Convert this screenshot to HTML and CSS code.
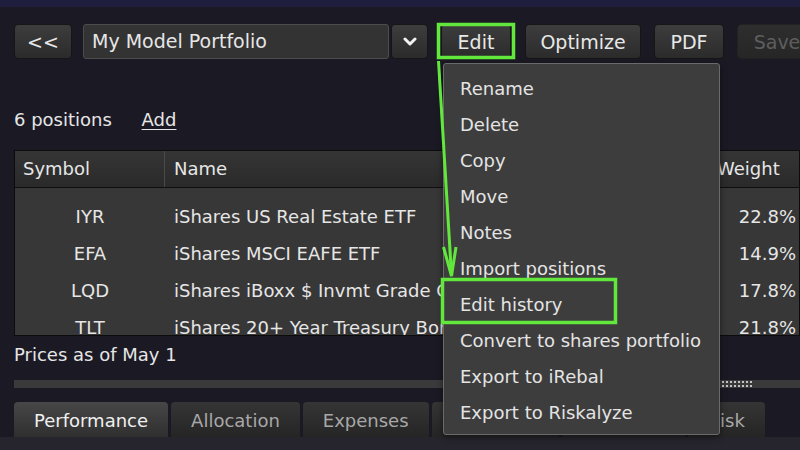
FILE: index.html
```html
<!DOCTYPE html>
<html lang="en">
<head>
    <meta charset="UTF-8">
    <meta name="viewport" content="width=device-width, initial-scale=1.0">
    <title>My Model Portfolio</title>
    <link rel="stylesheet" href="styles.css">
</head>
<body>

    <div class="topbar"></div>

    <div class="page">
        <!-- Toolbar -->
        <div class="toolbar">
            <button class="btn back-btn">&lt;&lt;</button>
            <div class="picker">My Model Portfolio</div>
            <button class="btn arrow-btn">
                <svg width="14" height="10" viewBox="0 0 14 10"><path d="M2 2 L7 7 L12 2" fill="none" stroke="#f2f2f2" stroke-width="3" stroke-linecap="round" stroke-linejoin="round"/></svg>
            </button>
            <button class="btn edit-btn">Edit</button>
            <button class="btn optimize-btn">Optimize</button>
            <button class="btn pdf-btn">PDF</button>
            <button class="btn save-btn" disabled>Save</button>
        </div>

        <div class="summary">
            <span>6 positions</span>
            <a class="add-link">Add</a>
        </div>

        <!-- Positions grid -->
        <div class="grid">
            <div class="grid-head">
                <div class="col-symbol">Symbol</div>
                <div class="col-name">Name</div>
                <div class="col-weight">Weight</div>
            </div>
            <div class="grid-body">
                <div class="grid-row"><div class="col-symbol">IYR</div><div class="col-name">iShares US Real Estate ETF</div><div class="col-weight">22.8%</div></div>
                <div class="grid-row"><div class="col-symbol">EFA</div><div class="col-name">iShares MSCI EAFE ETF</div><div class="col-weight">14.9%</div></div>
                <div class="grid-row"><div class="col-symbol">LQD</div><div class="col-name">iShares iBoxx $ Invmt Grade Corp Bd ETF</div><div class="col-weight">17.8%</div></div>
                <div class="grid-row"><div class="col-symbol">TLT</div><div class="col-name">iShares 20+ Year Treasury Bond ETF</div><div class="col-weight">21.8%</div></div>
            </div>
        </div>

        <div class="prices">Prices as of May 1</div>

        <div class="splitter"><span class="grip"></span></div>

        <div class="tabs">
            <div class="tab active">Performance</div>
            <div class="tab">Allocation</div>
            <div class="tab">Expenses</div>
            <div class="tab tab-stats">Statistics</div>
            <div class="tab tab-returns">Returns</div>
            <div class="tab">Risk</div>
        </div>
    </div>

    <div class="panel"></div>

    <!-- Edit menu -->
    <div class="edit-menu">
        <div class="menu-item">Rename</div>
        <div class="menu-item">Delete</div>
        <div class="menu-item">Copy</div>
        <div class="menu-item">Move</div>
        <div class="menu-item">Notes</div>
        <div class="menu-item">Import positions</div>
        <div class="menu-item">Edit history</div>
        <div class="menu-item">Convert to shares portfolio</div>
        <div class="menu-item">Export to iRebal</div>
        <div class="menu-item">Export to Riskalyze</div>
    </div>

    <!-- Green annotation -->
    <svg class="annotation" width="800" height="450" viewBox="0 0 800 450">
        <rect x="438.5" y="24.5" width="75" height="33" fill="none" stroke="#62e83c" stroke-width="3.5"/>
        <rect x="442.5" y="279.5" width="173" height="43" fill="none" stroke="#62e83c" stroke-width="3.5"/>
        <path d="M438.5 61 L451.5 275" fill="none" stroke="#62e83c" stroke-width="3"/>
        <path d="M443.5 247 L451.5 276 L456 247" fill="none" stroke="#62e83c" stroke-width="3" stroke-linejoin="miter"/>
    </svg>

</body>
</html>
```

FILE: styles.css
```css
body {
    font-family: "DejaVu Sans", Verdana, sans-serif;
    background-color: #1b1a24;
    color: #e6e6e6;
    margin: 0;
    width: 800px;
    height: 450px;
    overflow: hidden;
    position: relative;
}

.topbar {
    height: 7px;
    background-color: #1f1e3e;
}

.page {
    padding: 17px 0 0 14px;
}

/* Toolbar */
.toolbar {
    display: flex;
    align-items: center;
    height: 35px;
    white-space: nowrap;
}

.btn {
    height: 35px;
    padding: 0;
    font-family: inherit;
    font-size: 19px;
    color: #e8e8e8;
    background: linear-gradient(#3d3d3d, #2b2b2b);
    border: 1px solid #161616;
    border-radius: 4px;
    flex-shrink: 0;
}

.back-btn {
    width: 58px;
}

.picker {
    width: 306px;
    height: 35px;
    box-sizing: border-box;
    margin-left: 11px;
    padding-left: 8px;
    line-height: 33px;
    font-size: 19px;
    background-color: #333;
    border: 1px solid #4c4c4c;
    border-radius: 3px;
    flex-shrink: 0;
}

.arrow-btn {
    width: 37px;
    margin-left: 2px;
    display: flex;
    align-items: center;
    justify-content: center;
}

.edit-btn {
    width: 70px;
    margin-left: 13px;
}

.optimize-btn {
    width: 116px;
    margin-left: 14px;
}

.pdf-btn {
    width: 70px;
    margin-left: 13px;
}

.save-btn {
    width: 80px;
    margin-left: 13px;
    color: #5e5e5e;
    background: linear-gradient(#2e2e2e, #262626);
    border-color: #222;
}

/* Summary line */
.summary {
    margin-top: 49px;
    height: 24px;
    font-size: 18px;
    line-height: 24px;
}

.add-link {
    margin-left: 24px;
    text-decoration: underline;
    text-underline-offset: 3px;
}

/* Positions grid */
.grid {
    margin-top: 18px;
    height: 186px;
    box-sizing: border-box;
    border: 1px solid #0c0c0c;
    background-color: #373737;
    overflow: hidden;
    font-size: 18px;
}

.grid-head {
    display: flex;
    height: 36px;
    line-height: 36px;
    background: linear-gradient(#353535, #2a2a2a);
    border-bottom: 1px solid #0e0e0e;
}

.grid-head .col-symbol {
    text-align: left;
    padding-left: 8px;
    border-right: 1px solid #4a4a4a;
}

.grid-body {
    padding-top: 10px;
}

.grid-row {
    display: flex;
    height: 37px;
    line-height: 37px;
}

.col-symbol {
    width: 150px;
    box-sizing: border-box;
    text-align: center;
    flex-shrink: 0;
}

.col-name {
    width: 540px;
    padding-left: 9px;
    box-sizing: border-box;
    white-space: nowrap;
    overflow: hidden;
    flex-shrink: 0;
}

.col-weight {
    width: 95px;
    padding-right: 4px;
    box-sizing: border-box;
    text-align: right;
    flex-shrink: 0;
}

.grid-head .col-weight {
    text-align: left;
    padding-left: 12px;
}

.prices {
    height: 22px;
    margin-top: 8px;
    font-size: 18px;
    line-height: 22px;
}

/* Splitter bar */
.splitter {
    margin-top: 14px;
    height: 8px;
    background-color: #3a3a3a;
    position: relative;
}

.grip {
    position: absolute;
    left: 700px;
    top: 1px;
    width: 38px;
    height: 2px;
    border-top: 2px dotted #c4c4c4;
    border-bottom: 2px dotted #c4c4c4;
}

/* Tabs */
.tabs {
    display: flex;
    gap: 3px;
    margin-top: 14px;
    height: 35px;
}

.tab {
    padding: 0 20px;
    line-height: 37px;
    font-size: 18px;
    color: #a8a8a8;
    background: linear-gradient(#353535, #252525);
    border-radius: 4px 4px 0 0;
    white-space: nowrap;
    text-align: center;
}

.tab.active {
    color: #f0f0f0;
    background: linear-gradient(#474747, #2f2f2f);
}

.tab-stats {
    width: 87px;
}

.tab-returns {
    width: 83px;
}

.panel {
    height: 13px;
    background-color: #26252d;
}

/* Edit menu */
.edit-menu {
    position: absolute;
    left: 443px;
    top: 63px;
    width: 277px;
    height: 372px;
    box-sizing: border-box;
    padding-top: 7px;
    background-color: #3d3d3d;
    border: 1px solid #6a6a6a;
    border-radius: 3px;
    box-shadow: 0 2px 6px rgba(0, 0, 0, 0.5);
}

.menu-item {
    height: 36px;
    line-height: 36px;
    padding-left: 16px;
    font-size: 18px;
    color: #e4e4e4;
    white-space: nowrap;
}

.annotation {
    position: absolute;
    left: 0;
    top: 0;
}
```
